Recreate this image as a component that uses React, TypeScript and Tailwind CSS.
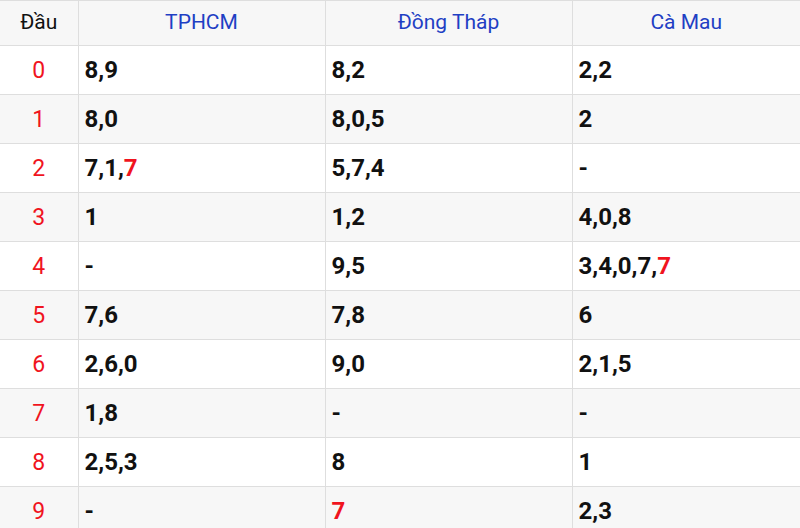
const rows: (string | [string, string])[][] = [
  ['8,9', '8,2', '2,2'],
  ['8,0', '8,0,5', '2'],
  [['7,1,', '7'], '5,7,4', '-'],
  ['1', '1,2', '4,0,8'],
  ['-', '9,5', ['3,4,0,7,', '7']],
  ['7,6', '7,8', '6'],
  ['2,6,0', '9,0', '2,1,5'],
  ['1,8', '-', '-'],
  ['2,5,3', '8', '1'],
  ['-', ['', '7'], '2,3'],
];

const Cell = ({ value }: { value: string | [string, string] }) => {
  if (typeof value === 'string') return <>{value}</>;
  return (
    <>
      {value[0]}
      <span className="text-[#f0141e]">{value[1]}</span>
    </>
  );
};

export default function App() {
  return (
    <div className="w-[800px] h-[528px] overflow-hidden bg-white" style={{ fontFamily: 'Roboto, sans-serif' }}>
      <table className="w-[800px] border-collapse table-fixed">
        <colgroup>
          <col className="w-[78px]" />
          <col className="w-[247px]" />
          <col className="w-[247px]" />
          <col className="w-[228px]" />
        </colgroup>
        <thead>
          <tr className="h-[45px] bg-[#f7f7f7] text-[21px]">
            <th className="border border-[#dedede] border-l-0 font-normal text-[#111]">Đầu</th>
            <th className="border border-[#dedede] font-normal text-[#1f3fc4]">TPHCM</th>
            <th className="border border-[#dedede] font-normal text-[#1f3fc4]">Đồng Tháp</th>
            <th className="border border-[#dedede] border-r-0 font-normal text-[#1f3fc4]">Cà Mau</th>
          </tr>
        </thead>
        <tbody>
          {rows.map((r, i) => (
            <tr key={i} className={`h-[49px] ${i % 2 === 1 ? 'bg-[#f7f7f7]' : 'bg-white'}`}>
              <td className="border border-[#dedede] border-l-0 text-center text-[23px] leading-none text-[#f0141e]">{i}</td>
              {r.map((v, j) => (
                <td
                  key={j}
                  className={`border border-[#dedede] pl-[6px] text-[24px] leading-none font-bold text-[#111] ${j === 2 ? 'border-r-0' : ''}`}
                >
                  <Cell value={v} />
                </td>
              ))}
            </tr>
          ))}
        </tbody>
      </table>
    </div>
  );
}
